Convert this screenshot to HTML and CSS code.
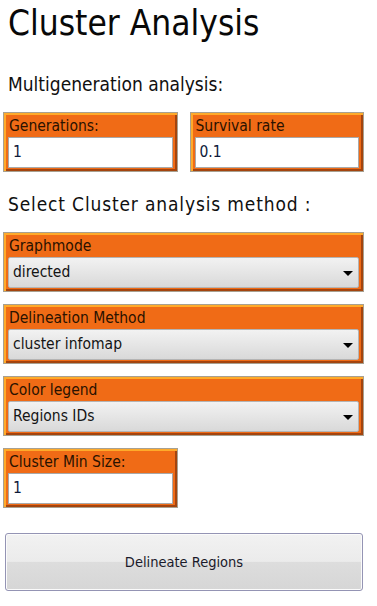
FILE: index.html
```html
<!DOCTYPE html>
<html>
<head>
<meta charset="utf-8">
<link rel="stylesheet" href="styles.css">
</head>
<body>
<div class="page">
  <h1 class="title">Cluster Analysis</h1>
  <div class="section">Multigeneration analysis:</div>
  <div class="row">
    <div class="box half">
      <div class="label">Generations:</div>
      <div class="field">1</div>
    </div>
    <div class="box half">
      <div class="label">Survival rate</div>
      <div class="field">0.1</div>
    </div>
  </div>
  <div class="section section2">Select Cluster analysis method :</div>
  <div class="stack">
    <div class="box">
      <div class="label">Graphmode</div>
      <div class="select"><span>directed</span><span class="arrow"></span></div>
    </div>
    <div class="box">
      <div class="label">Delineation Method</div>
      <div class="select"><span>cluster infomap</span><span class="arrow"></span></div>
    </div>
    <div class="box">
      <div class="label">Color legend</div>
      <div class="select"><span>Regions IDs</span><span class="arrow"></span></div>
    </div>
    <div class="box half">
      <div class="label">Cluster Min Size:</div>
      <div class="field">1</div>
    </div>
  </div>
  <div class="button">Delineate Regions</div>
</div>
</body>
</html>
```

FILE: styles.css
```css
html, body {
  margin: 0;
  padding: 0;
  background: #ffffff;
}
.page {
  width: 361px;
  padding: 0 0 0 3px;
  font-family: "DejaVu Sans Condensed", "DejaVu Sans", sans-serif;
  color: #101010;
}
.title {
  margin: 3px 0 0 0;
  padding-left: 5px;
  font-size: 35px;
  line-height: 40px;
  font-weight: normal;
  color: #080808;
}
.section {
  margin-top: 30px;
  padding-left: 5px;
  font-size: 19px;
  line-height: 22px;
  color: #101010;
}
.section2 {
  margin-top: 21px;
  letter-spacing: 0.85px;
}
.row {
  display: flex;
  gap: 12px;
  margin-top: 17px;
}
.stack {
  display: flex;
  flex-direction: column;
  gap: 12px;
  margin-top: 17px;
}
.box {
  box-sizing: border-box;
  height: 60px;
  border: 1px solid #a8a090;
  background: #f06b16;
  box-shadow: inset 2px 2px 0 #ffaa2a, inset -2px -2px 0 #a4440e;
  padding: 2px 4px 3px 4px;
  display: flex;
  flex-direction: column;
}
.half {
  width: 175px;
}
.label {
  height: 22px;
  line-height: 22px;
  font-size: 15.5px;
  color: #2a1200;
  padding-left: 1px;
}
.field {
  box-sizing: border-box;
  height: 31px;
  background: #ffffff;
  border: 1px solid #a8a8a8;
  font-size: 15.5px;
  line-height: 29px;
  padding-left: 4px;
  color: #0e1a3a;
}
.select {
  box-sizing: border-box;
  height: 31px;
  border: 1px solid #b4b4b4;
  border-radius: 2px;
  background: linear-gradient(#f2f2f2, #d9d9d9);
  font-size: 15.5px;
  line-height: 29px;
  padding: 0 5px 0 4px;
  color: #141414;
  display: flex;
  justify-content: space-between;
  align-items: center;
}
.arrow {
  width: 0;
  height: 0;
  border-left: 5px solid transparent;
  border-right: 5px solid transparent;
  border-top: 5px solid #000000;
  margin-top: 1px;
}
.button {
  box-sizing: border-box;
  margin: 25px 0 0 2px;
  width: 358px;
  height: 58px;
  border: 1px solid #9494b4;
  border-radius: 3px;
  background: linear-gradient(#f2f2f2 0%, #ebebeb 49%, #dddddd 50%, #d6d6d6 100%);
  box-shadow: inset 0 0 0 1px #fbfbfb;
  display: flex;
  align-items: center;
  justify-content: center;
  font-size: 14.5px;
  color: #1a1a2a;
}
```
